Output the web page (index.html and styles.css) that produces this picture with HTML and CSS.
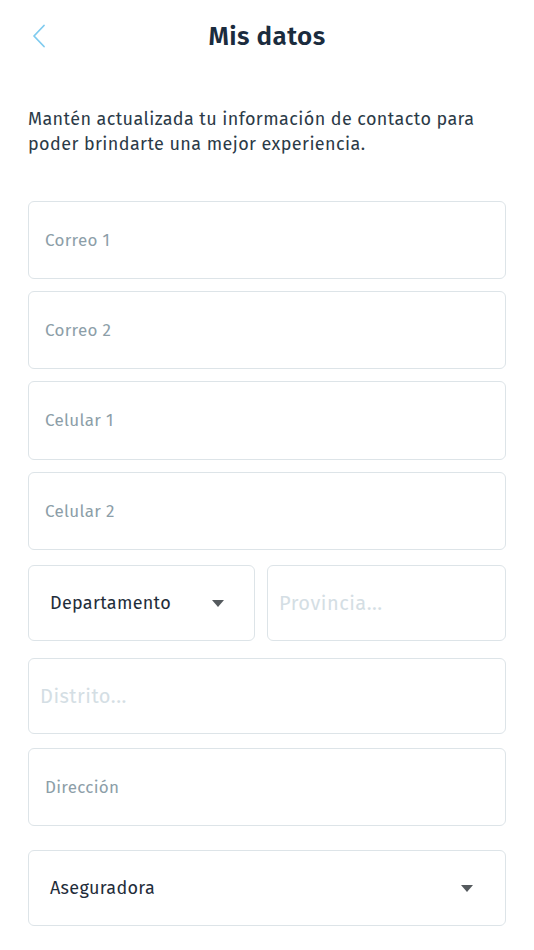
FILE: index.html
```html
<!DOCTYPE html>
<html lang="es">
<head>
<meta charset="utf-8">
<title>Mis datos</title>
<link rel="stylesheet" href="styles.css">
</head>
<body>
<div class="screen">
  <header class="header">
    <span class="back">
      <svg width="14" height="24" viewBox="0 0 14 24"><path d="M12 1.5 L2 12 L12 22.5" fill="none" stroke="#7fcbef" stroke-width="1.8" stroke-linecap="round" stroke-linejoin="round"/></svg>
    </span>
    <h1 class="title">Mis datos</h1>
  </header>
  <p class="intro">Mantén actualizada tu información de contacto para poder brindarte una mejor experiencia.</p>
  <form class="form">
    <div class="field f-c1"><span class="label">Correo 1</span></div>
    <div class="field f-c2"><span class="label">Correo 2</span></div>
    <div class="field f-t1"><span class="label">Celular 1</span></div>
    <div class="field f-t2"><span class="label">Celular 2</span></div>
    <div class="row">
      <div class="select sel-dep"><span class="value">Departamento</span><span class="caret"></span></div>
      <div class="select sel-prov"><span class="ph">Provincia...</span></div>
    </div>
    <div class="select sel-dist"><span class="ph">Distrito...</span></div>
    <div class="field f-dir"><span class="label">Dirección</span></div>
    <div class="select sel-aseg"><span class="value">Aseguradora</span><span class="caret"></span></div>
  </form>
</div>
</body>
</html>
```
FILE: styles.css
```css
* { box-sizing: border-box; }
html, body { margin: 0; padding: 0; background: #fff; }
body { font-family: "Fira Sans", "Noto Sans", "Open Sans", sans-serif; color: #1d2c3b; }
.screen { width: 534px; padding: 0 28px; }
.header { position: relative; height: 72px; display: flex; align-items: center; justify-content: center; }
.back { position: absolute; left: 4px; top: 24px; width: 14px; height: 24px; display: flex; }
.title { margin: 0; font-size: 26px; font-weight: 600; color: #1b2c3e; letter-spacing: 0.4px; line-height: 1; padding-top: 1px; }
.intro { margin: 35px 0 0; font-size: 18px; line-height: 25px; color: #2b3a47; letter-spacing: 0.4px; }
.form { display: flex; flex-direction: column; margin-top: 44px; }
.field, .select { border: 1.5px solid #dde4e8; border-radius: 6px; background: #fff; display: flex; align-items: center; }
.field { height: 78px; padding-left: 16px; }
.label { font-size: 17px; color: #8c9ea8; letter-spacing: 0.3px; }
.f-c2, .f-t1, .f-t2 { margin-top: 12px; }
.f-t1 { height: 79px; }
.row { display: flex; gap: 12px; margin-top: 15px; }
.select { height: 76px; }
.sel-dep { width: 227px; padding: 0 30px 0 21px; justify-content: space-between; }
.sel-prov { flex: 1; padding-left: 11px; }
.value { font-size: 18px; color: #1f2d3a; letter-spacing: 0.3px; }
.ph { font-size: 20px; color: #d4dee4; letter-spacing: 0.5px; }
.caret { width: 0; height: 0; border-left: 6.5px solid transparent; border-right: 6.5px solid transparent; border-top: 7px solid #555a5e; }
.sel-dist { margin-top: 17px; padding-left: 11px; }
.f-dir { margin-top: 14px; }
.sel-aseg { margin-top: 24px; height: 76px; padding: 0 32px 0 21px; justify-content: space-between; }
```
